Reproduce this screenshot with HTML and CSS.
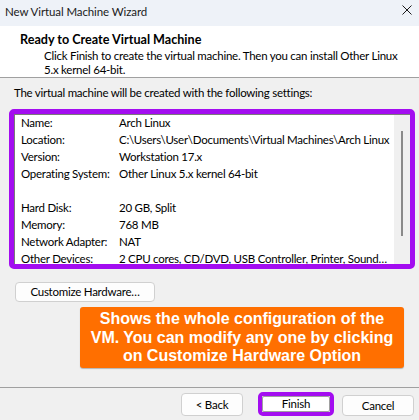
FILE: index.html
```html
<!DOCTYPE html>
<html>
<head>
<meta charset="utf-8">
<link rel="stylesheet" href="styles.css">
</head>
<body>
<div class="window">
  <div class="titlebar">
    <span class="title">New Virtual Machine Wizard</span>
    <svg class="close" width="10" height="10" viewBox="0 0 10 10"><path d="M0.5 0.5 L9.5 9.5 M9.5 0.5 L0.5 9.5" stroke="#1a1a1a" stroke-width="1" fill="none"/></svg>
  </div>
  <div class="header">
    <div class="h-title">Ready to Create Virtual Machine</div>
    <div class="h-desc">Click Finish to create the virtual machine. Then you can install Other Linux<br>5.x kernel 64-bit.</div>
  </div>
  <div class="content">
    <div class="intro">The virtual machine will be created with the following settings:</div>
    <div class="hl-box">
      <div class="listbox">
        <div class="rows">
          <div class="row"><span class="k">Name:</span><span class="v">Arch Linux</span></div>
          <div class="row"><span class="k">Location:</span><span class="v">C:\Users\User\Documents\Virtual Machines\Arch Linux</span></div>
          <div class="row"><span class="k">Version:</span><span class="v">Workstation 17.x</span></div>
          <div class="row"><span class="k">Operating System:</span><span class="v">Other Linux 5.x kernel 64-bit</span></div>
          <div class="row"></div>
          <div class="row"><span class="k">Hard Disk:</span><span class="v">20 GB, Split</span></div>
          <div class="row"><span class="k">Memory:</span><span class="v">768 MB</span></div>
          <div class="row"><span class="k">Network Adapter:</span><span class="v">NAT</span></div>
          <div class="row last"><span class="k">Other Devices:</span><span class="v">2 CPU cores, CD/DVD, USB Controller, Printer, Sound…</span></div>
        </div>
        <div class="scrollbar"><div class="thumb"></div></div>
      </div>
    </div>
    <button class="btn customize">Customize Hardware…</button>
    <div class="callout">Shows the whole configuration of the<br>VM. You can modify any one by clicking<br>on Customize Hardware Option</div>
  </div>
  <div class="footer">
    <button class="btn back">&lt; Back</button>
    <div class="hl-btn"><button class="btn finish">Finish</button></div>
    <button class="btn cancel">Cancel</button>
  </div>
</div>
</body>
</html>
```
FILE: styles.css
```css
html, body {
  margin: 0;
  padding: 0;
}
body {
  width: 419px;
  height: 420px;
  overflow: hidden;
  font-family: Lato, "Noto Sans", sans-serif;
  font-size: 11.5px;
  letter-spacing: -0.25px;
  color: #000;
  background: #f0f0f0;
}
.window {
  display: flex;
  flex-direction: column;
  height: 420px;
}
.titlebar {
  height: 26px;
  background: #eef2f8;
  display: flex;
  align-items: center;
  justify-content: space-between;
  padding: 0 7px 2px 5px;
  box-sizing: border-box;
}
.title {
  line-height: 14px;
  color: #1a1a1a;
  letter-spacing: -0.1px;
}
.close {
  display: block;
  margin-top: -4px;
}
.header {
  height: 52px;
  background: #fff;
  box-sizing: border-box;
  padding: 7px 0 0 20px;
  border-bottom: 1px solid #a0a0a0;
}
.h-title {
  font-weight: bold;
  font-size: 12.6px;
  letter-spacing: 0;
  line-height: 14px;
}
.h-desc {
  margin-top: 2px;
  padding-left: 24px;
  line-height: 14px;
}
.content {
  height: 310px;
  box-sizing: border-box;
  padding: 8px 0 0 0;
  border-bottom: 1px solid #a0a0a0;
}
.intro {
  line-height: 14px;
  padding-left: 14px;
}
.hl-box {
  margin: 9px 4px 0 9px;
  height: 160px;
  box-sizing: border-box;
  border: 5px solid #a30df0;
  border-radius: 5px;
}
.listbox {
  height: 100%;
  display: flex;
  background: #fff;
  border-top: 1px solid #7a7a7a;
  border-left: 1px solid #7a7a7a;
  box-sizing: border-box;
  overflow: hidden;
}
.rows {
  flex: 1;
  padding: 0 0 0 6px;
  margin-top: -1px;
  overflow: hidden;
}
.row {
  height: 17px;
  line-height: 17px;
  display: flex;
  white-space: nowrap;
}
.row.last {
  height: 15px;
  line-height: 15px;
  margin-top: 1px;
}
.k {
  width: 98px;
  flex: none;
}
.scrollbar {
  width: 16px;
  flex: none;
  background: #f0f0f0;
}
.thumb {
  width: 2px;
  height: 105px;
  background: #8a8a8a;
  margin: 16px 0 0 7px;
}
.btn {
  font-family: inherit;
  font-size: 11.5px;
  letter-spacing: -0.25px;
  color: #000;
  background: #fdfdfd;
  border: 1px solid #d0d0d0;
  border-radius: 4px;
  padding: 0;
  box-sizing: border-box;
  line-height: 14px;
}
.customize {
  display: block;
  margin: 13px 0 0 15px;
  width: 140px;
  height: 20px;
}
.callout {
  margin: 5px 0 0 80px;
  width: 324px;
  height: 61px;
  box-sizing: border-box;
  padding-top: 3px;
  background: #ff6f00;
  border-radius: 3px;
  box-shadow: 0 1px 1px rgba(0,0,0,0.25);
  color: #fff;
  font-family: "Liberation Sans", Arial, sans-serif;
  font-weight: bold;
  font-size: 16px;
  letter-spacing: 0;
  line-height: 18.5px;
  text-align: center;
}
.footer {
  flex: 1;
  display: flex;
  justify-content: flex-end;
  align-items: flex-start;
  padding: 4px 5px 0 0;
}
.back {
  width: 62px;
  height: 23px;
  margin-top: 1px;
}
.hl-btn {
  margin-left: 15px;
  border: 4px solid #a30df0;
  border-radius: 5px;
  width: 76px;
  height: 24px;
  box-sizing: border-box;
  display: flex;
}
.finish {
  flex: 1;
  border-radius: 2px;
  border-color: #a0a0a0;
  background: #fff;
}
.cancel {
  margin-left: 8px;
  width: 72px;
  height: 21px;
  margin-top: 3px;
}
```
